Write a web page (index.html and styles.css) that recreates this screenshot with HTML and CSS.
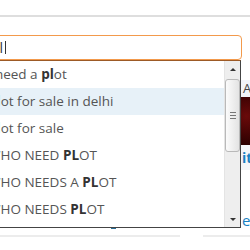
FILE: index.html
```html
<!DOCTYPE html>
<html lang="en">

<head>
    <meta charset="UTF-8">
    <meta name="viewport" content="width=device-width, initial-scale=1.0">
    <title>Search</title>
    <link rel="stylesheet" href="styles.css">
</head>

<body>
    <div class="topbar"></div>

    <div class="search">
        <div class="search-box">
            <span class="typed">pl</span><span class="caret"></span>
        </div>

        <div class="suggest">
            <ul class="suggest-list">
                <li>i need a <b>pl</b>ot</li>
                <li class="active"><b>pl</b>ot for sale in delhi</li>
                <li><b>pl</b>ot for sale</li>
                <li>WHO NEED <b>PL</b>OT</li>
                <li>WHO NEEDS A <b>PL</b>OT</li>
                <li>WHO NEEDS <b>PL</b>OT</li>
                <li><b>pl</b>ots in noida</li>
            </ul>
            <div class="scrollbar">
                <div class="sb-btn"><span class="arrow-up"></span></div>
                <div class="sb-thumb"><span class="grip"></span></div>
                <div class="sb-track"></div>
                <div class="sb-btn"><span class="arrow-down"></span></div>
            </div>
        </div>
    </div>

    <div class="content">
        <div class="main">
            <span class="tick"></span>
        </div>
        <aside class="side">
            <div class="side-head">Ads by Google</div>
            <div class="side-img"></div>
            <div class="side-link">items</div>
            <div class="side-more">edit</div>
        </aside>
    </div>

    <div class="rules">
        <div class="rule rule-left"></div>
        <div class="rule rule-right"></div>
    </div>
</body>

</html>
```

FILE: styles.css
```css
:root {
    --text-color: #555;
    --strong-color: #333;
    --link-color: #1a7fc1;
    --line-color: #dedede;
    --focus-color: #f39a4c;
}

body {
    font-family: 'Open Sans', 'Liberation Sans', sans-serif;
    font-size: 13.5px;
    color: var(--text-color);
    background-color: white;
    margin: 0;
    padding: 0;
    overflow: hidden;
}

.topbar {
    height: 15px;
    border-bottom: 2px solid var(--line-color);
}

/* search field + suggestion dropdown */
.search {
    position: relative;
    margin: 18px 0 0 -30px;
    width: 272px;
}

.search-box {
    box-sizing: border-box;
    height: 25px;
    border: 1px solid var(--focus-color);
    border-radius: 4px;
    padding-left: 20px;
    display: flex;
    align-items: center;
    font-size: 14px;
    color: var(--strong-color);
}

.caret {
    width: 1px;
    height: 13px;
    margin-left: 2px;
    background-color: #333;
}

.suggest {
    position: absolute;
    top: 25px;
    left: 0;
    width: 271px;
    height: 168px;
    box-sizing: border-box;
    border: 1px solid #444;
    border-top-color: #9c5a26;
    background-color: white;
    display: flex;
    z-index: 2;
}

.suggest-list {
    flex: 1;
    list-style: none;
    margin: 0;
    padding: 0;
    overflow: hidden;
}

.suggest-list li {
    height: 27px;
    line-height: 27px;
    padding-left: 17px;
    white-space: nowrap;
}

.suggest-list li.active {
    background-color: #e7f1f8;
}

.suggest-list b {
    color: var(--strong-color);
}

.scrollbar {
    width: 15px;
    display: flex;
    flex-direction: column;
    background-color: #eeeeee;
    border-left: 1px solid #e4e4e4;
}

.sb-btn {
    height: 16px;
    display: flex;
    align-items: center;
    justify-content: center;
}

.arrow-up,
.arrow-down {
    width: 0;
    height: 0;
    border-left: 3px solid transparent;
    border-right: 3px solid transparent;
}

.arrow-up {
    border-bottom: 3px solid #333;
}

.arrow-down {
    border-top: 3px solid #333;
}

.sb-thumb {
    height: 73px;
    margin: 2px 0 0 0;
    box-sizing: border-box;
    border: 1px solid #b9b9b9;
    border-radius: 3px;
    background: linear-gradient(to right, #fbfbfb, #e3e3e3);
    display: flex;
    align-items: center;
    justify-content: center;
}

.grip {
    width: 6px;
    height: 5px;
    border-top: 1px solid #777;
    border-bottom: 1px solid #777;
    background: linear-gradient(#777, #777) center / 100% 1px no-repeat;
}

.sb-track {
    flex: 1;
}

/* page behind the dropdown */
.content {
    display: flex;
    height: 175px;
}

.main {
    width: 241px;
    flex-shrink: 0;
}

.tick {
    display: block;
    width: 5px;
    height: 2px;
    margin: 167px 0 0 111px;
    background-color: #2a6f96;
}

.side {
    flex: 1;
    padding-top: 20px;
    white-space: nowrap;
    overflow: hidden;
}

.side-head {
    height: 17px;
    line-height: 17px;
    padding-left: 2px;
    background-color: #f1f4f8;
    color: #444;
    font-size: 13px;
}

.side-img {
    height: 48px;
    background: radial-gradient(circle at 60% 40%, #6a0a0a, #2a0000);
}

.side-link {
    height: 25px;
    line-height: 25px;
    padding-left: 1px;
    background-color: #f3f6f9;
    color: var(--link-color);
    font-weight: bold;
    font-size: 14px;
}

.side-more {
    margin-top: 40px;
    padding-left: 1px;
    color: var(--link-color);
    font-size: 15px;
    line-height: 20px;
}

.rules {
    display: flex;
    gap: 23px;
}

.rule {
    height: 2px;
    background-color: #ececec;
}

.rule-left {
    width: 180px;
}

.rule-right {
    flex: 1;
}
```
